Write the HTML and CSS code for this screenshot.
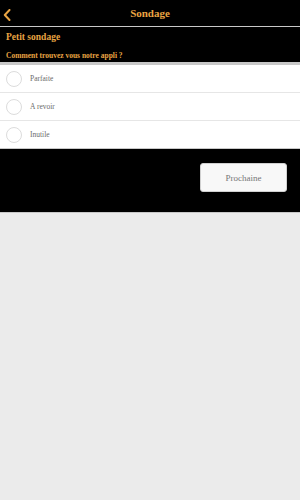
FILE: index.html
```html
<!DOCTYPE html>
<html lang="fr">
<head>
    <meta charset="UTF-8">
    <meta name="viewport" content="width=device-width, initial-scale=1.0">
    <title>Sondage</title>
    <link rel="stylesheet" href="styles.css">
</head>
<body>

    <div class="barre">
        <span class="retour">
            <svg width="8" height="12" viewBox="0 0 8 12"><path d="M6.5 1 L1.8 6 L6.5 11" fill="none" stroke="#e9a443" stroke-width="2" stroke-linecap="round" stroke-linejoin="round"/></svg>
        </span>
        <span class="titre">Sondage</span>
    </div>

    <div class="entete">
        <div class="nom">Petit sondage</div>
        <div class="question">Comment trouvez vous notre appli ?</div>
    </div>

    <div class="liste">
        <div class="choix"><span class="rond"></span>Parfaite</div>
        <div class="choix"><span class="rond"></span>A revoir</div>
        <div class="choix"><span class="rond"></span>Inutile</div>
    </div>

    <div class="actions">
        <button class="bouton">Prochaine</button>
    </div>

</body>
</html>
```

FILE: styles.css
```css
body {
    margin: 0;
    background-color: #ebebeb;
    font-family: "Liberation Serif", "DejaVu Serif", serif;
    height: 100vh;
}
.barre {
    position: relative;
    height: 26px;
    background-color: #000;
    border-bottom: 1px solid #c8c8c8;
    display: flex;
    align-items: center;
    justify-content: center;
}
.retour {
    position: absolute;
    left: 3px;
    top: 7px;
}
.titre {
    color: #e9a443;
    font-size: 11px;
    font-weight: bold;
}
.entete {
    background-color: #000;
    padding: 4px 6px 0 6px;
    height: 31px;
    border-bottom: 3px solid #c8c8c8;
    color: #e9a443;
}
.nom {
    font-size: 9.5px;
    font-weight: bold;
    line-height: 13px;
}
.question {
    font-size: 7.5px;
    font-weight: bold;
    margin-top: 7px;
    line-height: 10px;
}
.liste {
    background-color: #fff;
}
.choix {
    display: flex;
    align-items: center;
    height: 27px;
    border-bottom: 1px solid #e6e6e6;
    font-size: 7.5px;
    color: #6a6a6a;
}
.choix:last-child {
    border-bottom: 1px solid #c8c8c8;
}
.rond {
    width: 14px;
    height: 14px;
    border: 1px solid #dcdcdc;
    border-radius: 50%;
    margin: 0 8px 0 6px;
}
.actions {
    background-color: #000;
    height: 63px;
    border-bottom: 1px solid #c8c8c8;
    display: flex;
    justify-content: flex-end;
    align-items: flex-start;
    padding-right: 13px;
}
.bouton {
    margin-top: 14px;
    width: 87px;
    height: 29px;
    background-color: #f8f8f8;
    border: 1px solid #d0d0d0;
    border-radius: 3px;
    font-family: "Liberation Serif", "DejaVu Serif", serif;
    font-size: 9px;
    color: #777;
}
```
